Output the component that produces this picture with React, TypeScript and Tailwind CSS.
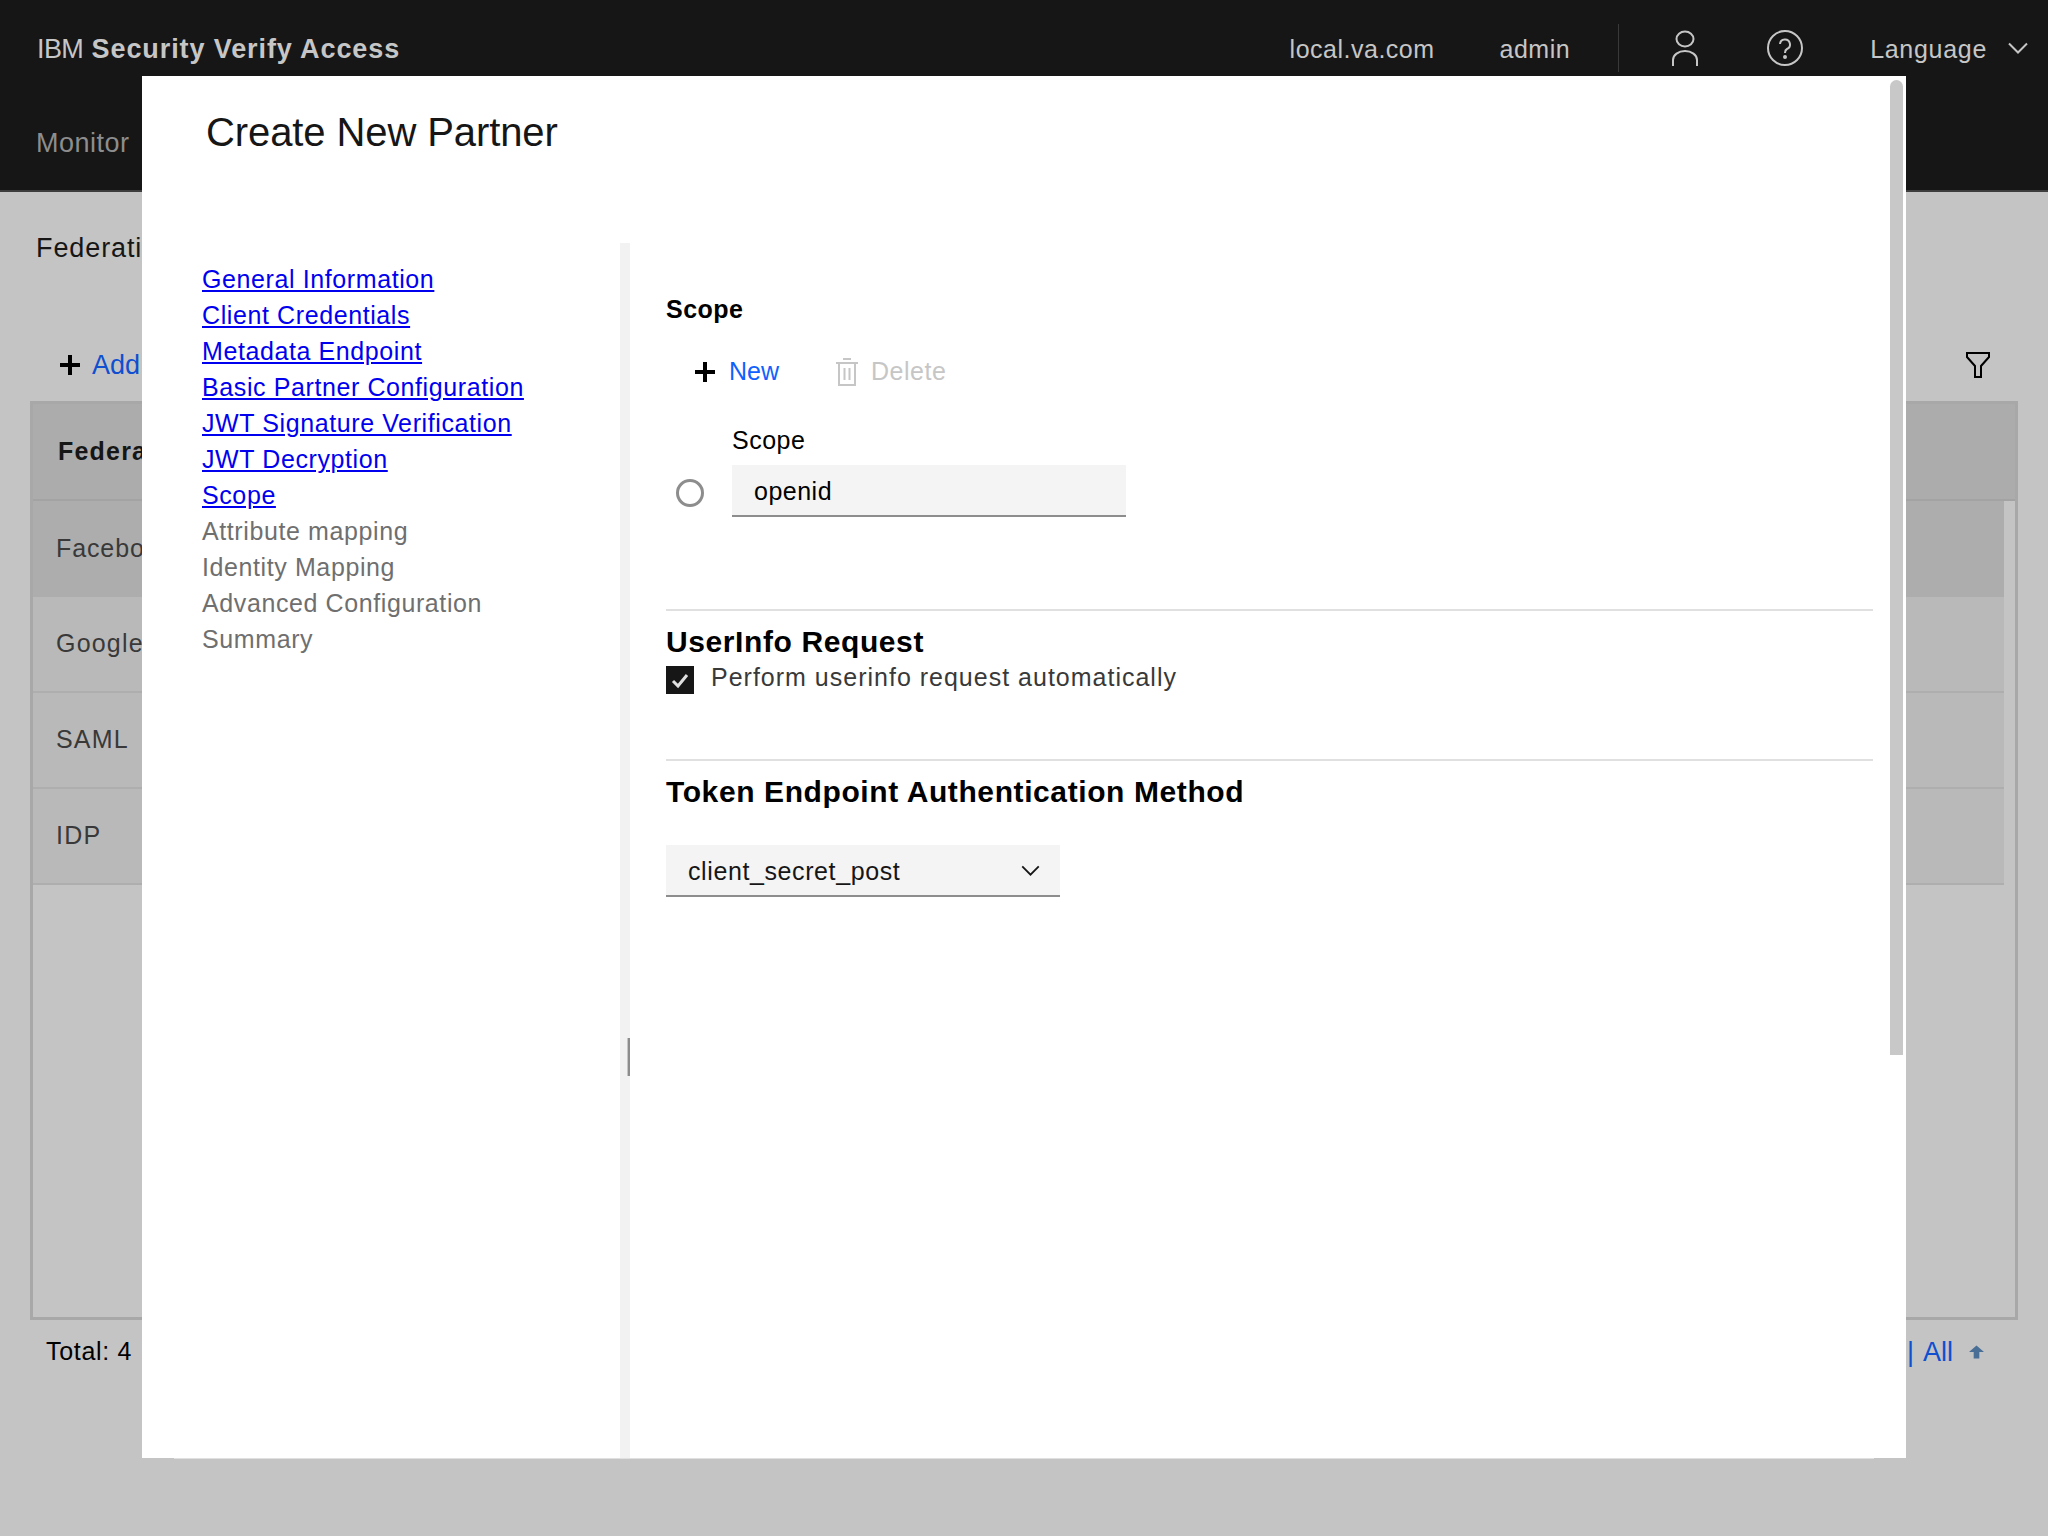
import React from "react";

const font = { fontFamily: '"Liberation Sans", Arial, sans-serif' };

const navLinks = [
  "General Information",
  "Client Credentials",
  "Metadata Endpoint",
  "Basic Partner Configuration",
  "JWT Signature Verification",
  "JWT Decryption",
  "Scope",
];
const navPending = ["Attribute mapping", "Identity Mapping", "Advanced Configuration", "Summary"];
const rows = ["Google", "SAML", "IDP"];

const Chevron = ({ className }: { className: string }) => (
  <svg viewBox="0 0 20 12" fill="none" stroke="currentColor" strokeWidth="2" className={className}>
    <path d="M1 1.5 L10 10.5 L19 1.5" />
  </svg>
);

const Modal = () => (
  <div className="absolute left-[142px] top-[76px] w-[1764px] h-[1382px] bg-white flex flex-col text-[25px] tracking-[0.5px]">
    <div className="h-[167px] shrink-0 pl-[64px] pt-[30px]">
      <h1 className="text-[40px] leading-[52px] tracking-[-0.1px] text-[#161616]">Create New Partner</h1>
    </div>
    <div className="flex flex-1 min-h-0">
      <div className="w-[478px] shrink-0 pl-[60px] pt-[18px] leading-[36px] tracking-[0.6px]">
        {navLinks.map((l) => (
          <div key={l}>
            <a className="text-[#0000ee] underline">{l}</a>
          </div>
        ))}
        {navPending.map((l) => (
          <div key={l} className="text-[#6f6f6f]">
            {l}
          </div>
        ))}
      </div>
      <div className="w-[10px] shrink-0 bg-[#f2f2f2]" />
      <div className="w-[1243px] pl-[36px] pt-[50px] text-black">
        <div className="font-bold leading-[32px]">Scope</div>
        <div className="flex items-center h-[40px] mt-[27px] pl-[28px]">
          <svg viewBox="0 0 22 22" className="w-[22px] h-[22px]" stroke="#000" strokeWidth="4">
            <path d="M11 1 V21 M1 11 H21" />
          </svg>
          <span className="ml-[13px] text-[#0f62fe] tracking-normal">New</span>
          <svg viewBox="0 0 22 28" fill="none" stroke="#c6c6c6" strokeWidth="2" className="ml-[57px] w-[22px] h-[28px]">
            <path d="M0 5 H22 M7 1 H15 M3 5 V27 H19 V5 M8.5 10 V22 M13.5 10 V22" />
          </svg>
          <span className="ml-[13px] text-[#c6c6c6]">Delete</span>
        </div>
        <div className="flex items-end mt-[32px]">
          <div className="w-[28px] h-[28px] mb-[10px] ml-[10px] rounded-full border-[3px] border-[#8d8d8d] bg-white" />
          <div className="ml-[28px]">
            <div className="leading-[32px] mb-[9px]">Scope</div>
            <div className="w-[394px] h-[52px] bg-[#f4f4f4] border-b-2 border-[#8d8d8d] pl-[22px] leading-[52px]">
              openid
            </div>
          </div>
        </div>
        <div className="h-[2px] bg-[#e0e0e0] mt-[92px]" />
        <h2 className="text-[30px] leading-[36px] font-bold tracking-[0.6px] mt-[13px]">UserInfo Request</h2>
        <div className="flex items-start mt-[4px]">
          <div className="w-[28px] h-[28px] bg-[#161616] flex items-center justify-center mt-[2px]">
            <svg viewBox="0 0 20 20" fill="none" stroke="#e0e0e0" strokeWidth="3" className="w-[20px] h-[20px]">
              <path d="M3 11 L8 16 L17 5" />
            </svg>
          </div>
          <span className="ml-[17px] leading-[26px] tracking-[1px] text-[#393939]">Perform userinfo request automatically</span>
        </div>
        <div className="h-[2px] bg-[#e0e0e0] mt-[65px]" />
        <h2 className="text-[30px] leading-[36px] font-bold tracking-[0.6px] mt-[13px]">Token Endpoint Authentication Method</h2>
        <div className="w-[394px] h-[52px] mt-[35px] bg-[#f4f4f4] border-b-2 border-[#8d8d8d] pl-[22px] pr-[20px] flex items-center justify-between text-[#161616] tracking-[0.6px]">
          <span className="mt-[3px]">client_secret_post</span>
          <Chevron className="w-[19px] h-[11px]" />
        </div>
      </div>
    </div>
    <div className="absolute left-[32px] right-[32px] bottom-[-1px] h-px bg-[#e0e0e0]" />
    <div className="absolute left-[1748px] top-[4px] w-[13px] h-[975px] rounded-t-full bg-[#c8c8c8]" />
    <div className="absolute left-[485px] top-[962px] w-[3px] h-[38px] border-l border-[#c6c6c6] bg-[#8d8d8d]" />
  </div>
);

export default function App() {
  return (
    <div
      className="relative w-[2048px] h-[1536px] overflow-hidden bg-[#c4c4c4] text-[25px] tracking-[0.9px]"
      style={font}
    >
      <header className="h-[192px] bg-[#161616] border-b-2 border-[#3d3d3d] text-[#c6c6c6]">
        <div className="flex items-center h-[96px]">
          <div className="pl-[37px] pt-[2px] tracking-[0.9px] text-[27px]">
            <span className="font-light tracking-[-0.6px]">IBM</span> <span className="font-bold">Security Verify Access</span>
          </div>
          <div className="ml-auto flex items-center h-[48px]">
            <span className="mt-[4px] tracking-[0.5px]">local.va.com</span>
            <span className="ml-[65px] mt-[4px] tracking-[0.5px]">admin</span>
            <div className="ml-[48px] w-px h-[48px] bg-[#393939]" />
            <svg viewBox="0 0 26 36" fill="none" stroke="#c6c6c6" strokeWidth="2" className="ml-[53px] w-[26px] h-[36px]">
              <ellipse cx="13" cy="9" rx="8.5" ry="7.5" />
              <path d="M1 36 V30 A12 9 0 0 1 25 30 V36" />
            </svg>
            <svg viewBox="0 0 36 36" fill="none" stroke="#c6c6c6" strokeWidth="2" className="ml-[69px] w-[36px] h-[36px]">
              <circle cx="18" cy="18" r="17" />
              <path d="M13 14 A5 5 0 1 1 20 19 Q18 20 18 23" />
              <circle cx="18" cy="27" r="1" fill="#c6c6c6" />
            </svg>
            <span className="ml-[67px] mt-[4px] tracking-[0.7px]">Language</span>
            <Chevron className="ml-[21px] mr-[20px] w-[20px] h-[12px]" />
          </div>
        </div>
        <div className="pl-[36px] pt-[27px] text-[27px] tracking-[0.5px] text-[#8d8d8d]">Monitor</div>
      </header>

      <div className="px-[30px]">
        <div className="pl-[6px] pt-[38px] leading-[36px] text-[27px] text-[#161616]">Federation</div>
        <div className="flex items-center justify-between h-[40px] mt-[79px]">
          <div className="flex items-center pl-[29px]">
            <svg viewBox="0 0 22 22" className="w-[22px] h-[22px]" stroke="#000" strokeWidth="4">
              <path d="M11 1 V21 M1 11 H21" />
            </svg>
            <span className="ml-[11px] text-[27px] text-[#0f4fd0] tracking-normal">Add</span>
          </div>
          <svg viewBox="0 0 24 26" fill="none" stroke="#000" strokeWidth="2" className="mr-[28px] w-[24px] h-[26px]">
            <path d="M1 1 H23 V5 L15 14 V25 H9 V14 L1 5 Z" />
          </svg>
        </div>
        <div className="mt-[16px] h-[919px] border-[3px] border-[#a8a8a8]">
          <div className="h-[97px] bg-[#acacac] border-b-2 border-[#a3a3a3] pl-[25px] flex items-center font-bold text-[#161616] tracking-[1.2px]">
            Federation
          </div>
          <div className="mr-[11px] text-[#393939]">
            <div className="h-[96px] bg-[#adadad] pl-[23px] flex items-center">Facebook</div>
            {rows.map((r) => (
              <div key={r} className="h-[96px] bg-[#b9b9b9] border-b-2 border-[#aeaeae] pl-[23px] flex items-center tracking-[1.2px]">
                {r}
              </div>
            ))}
          </div>
        </div>
        <div className="flex items-center justify-between h-[36px] mt-[14px]">
          <span className="pl-[16px] text-black tracking-[0.7px]">Total: 4</span>
          <div className="flex items-center text-[27px] text-[#0f4fd0] tracking-normal">
            <span className="mr-[9px]">|</span>
            <span>All</span>
            <svg viewBox="0 0 16 14" fill="#4a6f96" className="ml-[16px] mr-[34px] w-[15px] h-[14px]">
              <path d="M8 0 L16 7 H11 V14 H5 V7 H0 Z" />
            </svg>
          </div>
        </div>
      </div>

      <Modal />
    </div>
  );
}
